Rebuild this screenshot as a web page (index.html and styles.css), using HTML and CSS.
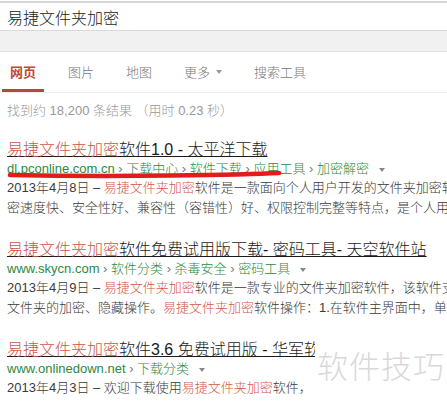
FILE: index.html
```html
<!DOCTYPE html>
<html lang="zh">
<head>
<meta charset="utf-8">
<link rel="stylesheet" href="styles.css">
</head>
<body>
<div class="searchbar"><span class="query">易捷文件夹加密</span></div>
<div class="graybar"></div>
<nav class="tabs">
  <span class="tab active">网页</span>
  <span class="tab">图片</span>
  <span class="tab">地图</span>
  <span class="tab">更多<span class="caret"></span></span>
  <span class="tab">搜索工具</span>
</nav>
<div class="count">找到约 18,200 条结果 （用时 0.23 秒）</div>

<main class="results">
<div class="result">
  <div class="title"><span class="hl">易捷文件夹加密</span>软件1.0 - 太平洋下载</div>
  <div class="url">dl.pconline.com.cn <span class="sep">›</span> 下载中心 <span class="sep">›</span> 软件下载 <span class="sep">›</span> 应用工具 <span class="sep">›</span> 加密解密 <span class="caret"></span></div>
  <div class="desc">2013年4月8日 – <span class="hl">易捷文件夹加密</span>软件是一款面向个人用户开发的文件夹加密软件</div>
  <div class="desc">密速度快、安全性好、兼容性（容错性）好、权限控制完整等特点，是个人用</div>
</div>

<div class="result">
  <div class="title"><span class="hl">易捷文件夹加密</span>软件免费试用版下载- 密码工具- 天空软件站</div>
  <div class="url">www.skycn.com <span class="sep">›</span> 软件分类 <span class="sep">›</span> 杀毒安全 <span class="sep">›</span> 密码工具 <span class="caret"></span></div>
  <div class="desc">2013年4月9日 – <span class="hl">易捷文件夹加密</span>软件是一款专业的文件夹加密软件，该软件支</div>
  <div class="desc">文件夹的加密、隐藏操作。<span class="hl">易捷文件夹加密</span>软件操作：1.在软件主界面中，单</div>
</div>

<div class="result">
  <div class="title"><span class="hl">易捷文件夹加密</span>软件3.6 免费试用版 - 华军软</div>
  <div class="url">www.onlinedown.net <span class="sep">›</span> 下载分类 <span class="caret"></span></div>
  <div class="desc">2013年4月3日 – 欢迎下载使用<span class="hl">易捷文件夹加密</span>软件，</div>
</div>
</main>

<svg class="scribble" width="290" height="14" viewBox="0 0 290 14">
  <path d="M10 8 Q90 9.5 170 8.5 T279 6" fill="none" stroke="#e31b1b" stroke-width="4.5" stroke-linecap="round"/>
</svg>

<div class="watermark">软件技巧</div>
</body>
</html>
```

FILE: styles.css
```css
html, body {
  margin: 0;
  padding: 0;
  overflow: hidden;
  background: #fff;
}
body {
  position: relative;
  width: 447px;
  height: 403px;
  font-family: "Liberation Sans", "Noto Sans CJK SC", sans-serif;
  font-weight: 300;
  color: #333;
  white-space: nowrap;
}
.searchbar {
  margin-top: 1px;
  border-top: 2px solid #d6d6d6;
  border-bottom: 1px solid #d9d9d9;
  height: 27px;
  display: flex;
  align-items: center;
  padding-left: 7px;
}
.query {
  font-size: 16px;
  color: #222;
}
.graybar {
  height: 20px;
  background: #f1f1f1;
  border-bottom: 1px solid #e2e2e2;
}
.tabs {
  display: flex;
  gap: 16px;
  padding-left: 2px;
  height: 40px;
  border-bottom: 1px solid #eeeeee;
}
.tab {
  display: flex;
  align-items: center;
  padding: 0 8px;
  font-size: 13px;
  color: #777;
  border-bottom: 3px solid transparent;
  margin-top: 2px;
}
.tab.active {
  color: #c2463a;
  font-weight: bold;
  border-bottom-color: #b5483c;
}
.caret {
  display: inline-block;
  width: 0;
  height: 0;
  margin-left: 6px;
  border-left: 3.5px solid transparent;
  border-right: 3.5px solid transparent;
  border-top: 4px solid #999;
  vertical-align: middle;
}
.count {
  font-size: 13px;
  color: #999;
  line-height: 20px;
  margin-top: 8px;
  padding-left: 7px;
}
.results {
  display: flex;
  flex-direction: column;
  gap: 22px;
  padding-left: 7px;
  margin-top: 19px;
}
.title {
  font-size: 16px;
  line-height: 19px;
  color: #1a1a1a;
  text-decoration: underline;
}
.title .hl {
  color: #c9574c;
}
.url {
  font-size: 13px;
  line-height: 19px;
  color: #2b8a3e;
}
.url .sep {
  color: #777;
}
.url .caret {
  border-top-color: #888;
}
.desc {
  font-size: 13px;
  line-height: 20px;
  color: #3a3a3a;
}
.desc .hl {
  color: #d4574b;
}
.scribble {
  position: absolute;
  left: 0;
  top: 167px;
}
.watermark {
  position: absolute;
  left: 315px;
  top: 334px;
  width: 132px;
  height: 69px;
  padding-top: 15px;
  box-sizing: border-box;
  background: #fff;
  text-align: center;
  font-family: "Noto Sans CJK SC", sans-serif;
  font-size: 31px;
  line-height: 31px;
  color: #d9d9d9;
  letter-spacing: 1px;
}
```
